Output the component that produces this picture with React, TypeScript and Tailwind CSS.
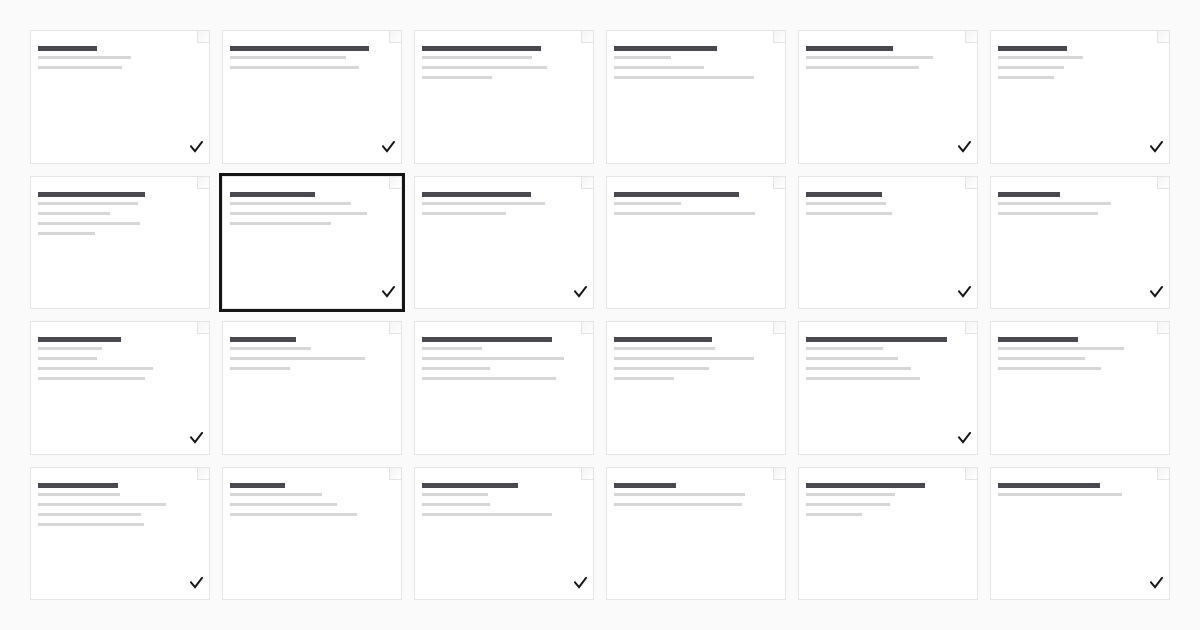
import React from "react";

type Card = { t: number; l: number[]; c: boolean; s?: boolean };

const cards: Card[] = [
  { t: 59, l: [93, 84], c: true },
  { t: 139, l: [116, 129], c: true },
  { t: 119, l: [110, 125, 70], c: false },
  { t: 103, l: [57, 90, 140], c: false },
  { t: 87, l: [127, 113], c: true },
  { t: 69, l: [85, 66, 56], c: true },

  { t: 107, l: [100, 72, 102, 57], c: false },
  { t: 85, l: [121, 137, 101], c: true, s: true },
  { t: 109, l: [123, 84], c: true },
  { t: 125, l: [67, 141], c: false },
  { t: 76, l: [80, 86], c: true },
  { t: 62, l: [113, 100], c: true },

  { t: 83, l: [64, 59, 115, 107], c: true },
  { t: 66, l: [81, 135, 60], c: false },
  { t: 130, l: [60, 142, 68, 134], c: false },
  { t: 98, l: [101, 140, 95, 60], c: false },
  { t: 141, l: [77, 92, 105, 114], c: true },
  { t: 80, l: [126, 87, 103], c: false },

  { t: 80, l: [82, 128, 103, 106], c: true },
  { t: 55, l: [92, 107, 127], c: false },
  { t: 96, l: [66, 68, 130], c: true },
  { t: 62, l: [131, 128], c: false },
  { t: 119, l: [89, 84, 56], c: false },
  { t: 102, l: [124], c: true },
];

function Check() {
  return (
    <svg
      width="13"
      height="12"
      viewBox="0 0 13 12"
      className="absolute right-[6px] bottom-[10px]"
      fill="none"
    >
      <path
        d="M1 5.5 L5 10.2 L12 1"
        stroke="#161616"
        strokeWidth="2"
        strokeLinecap="square"
        strokeLinejoin="miter"
      />
    </svg>
  );
}

function CardView({ card }: { card: Card }) {
  return (
    <div
      className={
        "relative bg-white border border-[#e4e4e6] pt-[15px] pl-[7px] " +
        (card.s ? "outline-[3px] outline-solid outline-[#151515] outline-offset-0" : "")
      }
    >
      <div className="absolute -top-px -right-px w-[13px] h-[13px] border border-[#e3e3e3] bg-gradient-to-br from-[#f4f4f4] to-white" />
      <div className="h-[5px] bg-[#49494f]" style={{ width: card.t }} />
      <div className="flex flex-col gap-[7px] mt-[5px]">
        {card.l.map((w, i) => (
          <div key={i} className="h-[3px] bg-[#d7d7da]" style={{ width: w }} />
        ))}
      </div>
      {card.c && <Check />}
    </div>
  );
}

export default function App() {
  return (
    <div className="w-[1200px] h-[630px] bg-[#fafafa] p-[30px] font-['Liberation_Sans',sans-serif]">
      <div className="grid grid-cols-6 grid-rows-4 gap-3 h-[570px]">
        {cards.map((c, i) => (
          <CardView key={i} card={c} />
        ))}
      </div>
    </div>
  );
}
